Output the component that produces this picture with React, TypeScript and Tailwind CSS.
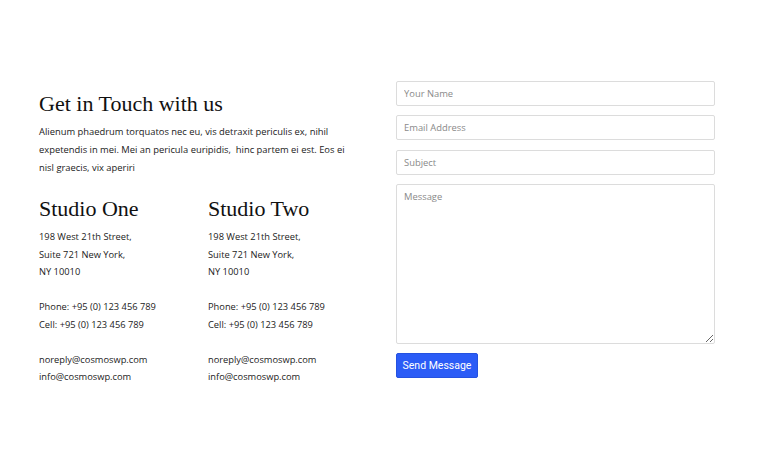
import React from "react";

const serif = { fontFamily: '"Liberation Serif", "DejaVu Serif", serif' };

function Studio({ name }: { name: string }) {
  return (
    <div className="w-[169px] shrink-0">
      <h3 className="text-[22px] leading-[26px] text-[#111] mb-[6px]" style={serif}>
        {name}
      </h3>
      <div className="text-[9.3px] leading-[17.5px] text-[#222]">
        <p>198 West 21th Street,</p>
        <p>Suite 721 New York,</p>
        <p>NY 10010</p>
        <p className="mt-[17.5px]">Phone: +95 (0) 123 456 789</p>
        <p>Cell: +95 (0) 123 456 789</p>
        <p className="mt-[17.5px]">noreply@cosmoswp.com</p>
        <p>info@cosmoswp.com</p>
      </div>
    </div>
  );
}

export default function App() {
  const inputCls =
    "w-full h-[25px] border border-[#dcdcdc] rounded-[2px] px-[7px] text-[9.4px] text-[#333] placeholder:text-[#8a8a8a] outline-none bg-white";
  return (
    <div
      className="w-[760px] h-[460px] bg-white flex items-start pt-[81px]"
      style={{ fontFamily: '"Open Sans", "DejaVu Sans", sans-serif' }}
    >
      <div className="ml-[39px] w-[320px] shrink-0 mt-[9px]">
        <h2 className="text-[22px] leading-[28px] text-[#111] mb-[5px]" style={serif}>
          Get in Touch with us
        </h2>
        <p className="text-[9.4px] leading-[18px] text-[#222] whitespace-nowrap">
          Alienum phaedrum torquatos nec eu, vis detraxit periculis ex, nihil
          <br />
          expetendis in mei. Mei an pericula euripidis,&nbsp; hinc partem ei est. Eos ei
          <br />
          <span>nisl graecis, vix aperiri</span>
        </p>
        <div className="flex mt-[19px]">
          <Studio name="Studio One" />
          <Studio name="Studio Two" />
        </div>
      </div>
      <div className="ml-[37px] w-[319px] flex flex-col">
        <input className={inputCls} placeholder="Your Name" />
        <input className={inputCls + " mt-[9px]"} placeholder="Email Address" />
        <input className={inputCls + " mt-[10px]"} placeholder="Subject" />
        <textarea
          className="mt-[9px] w-full h-[160px] border border-[#dcdcdc] rounded-[2px] px-[7px] py-[5px] text-[9.4px] text-[#333] placeholder:text-[#8a8a8a] outline-none bg-white"
          placeholder="Message"
        />
        <div className="mt-[9px] flex">
          <button
            className="h-[25px] w-[82px] rounded-[2px] bg-[#2b5cf6] text-white text-[10.5px] border border-[#2552e0]"
            style={{ fontFamily: 'Roboto, "Liberation Sans", sans-serif' }}
          >
            Send Message
          </button>
        </div>
      </div>
    </div>
  );
}
